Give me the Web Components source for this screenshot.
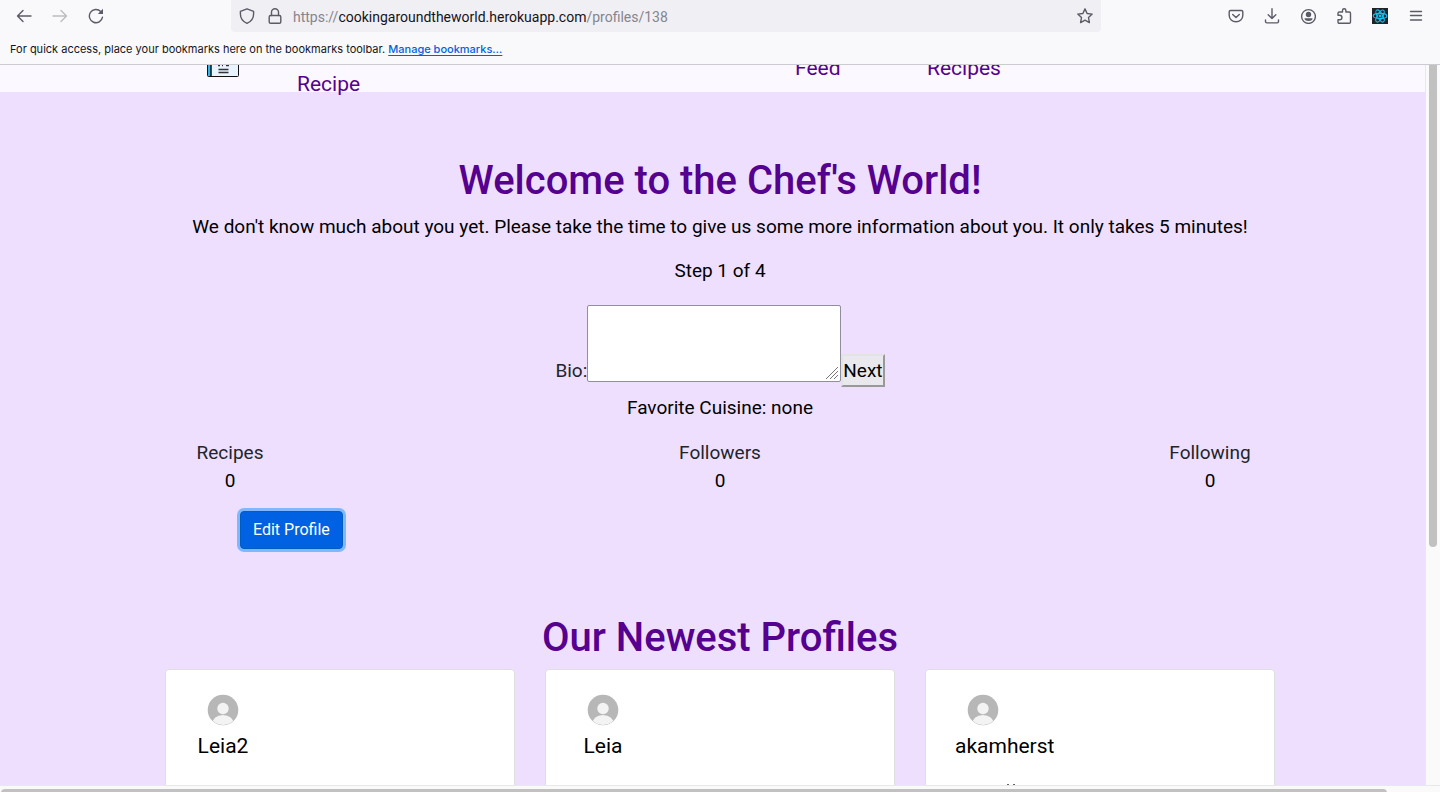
<!DOCTYPE html>
<html lang="en">
<head>
<meta charset="utf-8">
<title>Cooking Around the World</title>
<style>
html,body{margin:0;height:100%}
body{font-family:Roboto,"Liberation Sans",sans-serif;overflow:hidden}
</style>
</head>
<body>
<app-window></app-window>
<script>
const define = (name, html) => customElements.define(name, class extends HTMLElement {
  constructor() {
    super();
    const t = document.createElement('template');
    t.innerHTML = html;
    this.attachShadow({mode: 'open'}).append(t.content.cloneNode(true));
  }
});

define('tool-button', `
<style>
:host{display:block}
button{display:grid;place-items:center;width:36px;height:32px;margin:0;padding:0;border:0;background:none;color:inherit}
</style>
<button type="button"><slot></slot></button>`);

define('address-bar', `
<style>
:host{display:flex;align-items:center;background:#f0eff4;border-radius:0 0 4px 4px;height:32px;color:#5b5b66;font:14px/20px Roboto,"Liberation Sans",sans-serif}
svg{display:block;fill:none;stroke:currentColor;stroke-width:1.4;stroke-linejoin:round;stroke-linecap:round}
.shield{margin-left:8px}
.lock{margin-left:12px;margin-right:10px}
.url{flex:1;color:#85858d;white-space:nowrap;padding-top:2px}
.url b{font-weight:400;color:#15141a}
.star{margin-right:8px}
</style>
<svg class="shield" width="16" height="16" viewBox="0 0 16 16"><path d="M8 .8 14.600 3.300V6c0 4-2.600 7.600-6.600 9.300C4 13.600 1.400 10 1.400 6V3.300z"/></svg>
<svg class="lock" width="16" height="16" viewBox="0 0 16 16"><rect x="2.200" y="7.500" width="11.600" height="7.800" rx="1.400"/><path d="M4.500 7.500V4a3.500 3.300 0 0 1 7 0v3.500"/></svg>
<span class="url">https://<b>cookingaroundtheworld.herokuapp.com</b>/profiles/138</span>
<svg class="star" width="16" height="16" viewBox="0 0 16 16"><path d="m8 .9 2.100 4.600 5.100.6-3.700 3.500.9 5L8 12.200l-4.400 2.400.9-5L.8 6.100l5.100-.6z"/></svg>`);

define('browser-toolbar', `
<style>
:host{display:block;background:#f9f9fb;color:#5b5b66;border-bottom:1px solid #ccccd0;font-family:Inter,"Liberation Sans",sans-serif}
.row{display:grid;grid-template-columns:231px minmax(0,870px) 1fr;height:32px}
.nav,.tools{display:flex}
.nav{padding-left:6px}
.tools{justify-content:flex-end;padding-right:6px}
svg{display:block;fill:none;stroke:currentColor;stroke-width:1.4;stroke-linejoin:round;stroke-linecap:round}
.off{color:#bcbcc2}
p{margin:0;height:32px;padding:1px 10px 0;box-sizing:border-box;font-size:11px;line-height:32px;color:#15141a}
a{color:#0061e0;text-underline-offset:2px;font-weight:500}
</style>
<div class="row">
<div class="nav">
<tool-button><svg width="16" height="16" viewBox="0 0 16 16"><path d="M7 2.500 1.500 8 7 13.500M1.500 8H15"/></svg></tool-button>
<tool-button class="off"><svg width="16" height="16" viewBox="0 0 16 16"><path d="m9 2.500 5.500 5.500L9 13.500M14.500 8H1"/></svg></tool-button>
<tool-button><svg width="16" height="16" viewBox="0 0 16 16"><path d="M14.500 9.200a6.600 6.600 0 1 1-1.800-5.700"/><path d="M15 .8V6H9.800z" fill="currentColor" stroke="none"/></svg></tool-button>
</div>
<address-bar></address-bar>
<div class="tools">
<tool-button><svg width="16" height="16" viewBox="0 0 16 16"><path d="M2.500 2.500h11q1.300 0 1.300 1.300v3.700a6.800 6.300 0 0 1-13.600 0V3.800q0-1.300 1.300-1.300zM4.700 6.400 8 9.600l3.300-3.200"/></svg></tool-button>
<tool-button><svg width="16" height="16" viewBox="0 0 16 16"><path d="M8 .8v9.700M4.200 6.800 8 10.500l3.800-3.700M1.500 12v1.500q0 1.400 1.400 1.400h10.200q1.400 0 1.400-1.400V12"/></svg></tool-button>
<tool-button><svg width="16" height="16" viewBox="0 0 16 16"><circle cx="8.500" cy="8.500" r="6.900"/><g fill="currentColor" stroke="none"><circle cx="8.500" cy="6.500" r="2.700"/><path d="M4.500 10.300h8q0 2.700-4 2.700t-4-2.700"/></g></svg></tool-button>
<tool-button><svg width="16" height="16" viewBox="0 0 16 16"><path d="M2 7.300V5.200q0-1.200 1.200-1.200H6.500V2.400a1.700 1.700 0 0 1 3.400 0V4h3.400q1.200 0 1.200 1.200v8.900q0 1.200-1.200 1.200H3.200Q2 15.300 2 14.100v-2.300h1.700a2.200 2.200 0 0 0 0-4.500z"/></svg></tool-button>
<tool-button><svg width="16" height="16" viewBox="0 0 16 16"><path d="M0 0h16v16H0z" fill="#20232a" stroke="none"/><g stroke="#18c0ee" stroke-width="1.100"><ellipse cx="8" cy="8" rx="6.800" ry="2.600"/><ellipse cx="8" cy="8" rx="6.800" ry="2.600" transform="rotate(60 8 8)"/><ellipse cx="8" cy="8" rx="6.800" ry="2.600" transform="rotate(120 8 8)"/></g><circle cx="8" cy="8" r="1.400" fill="#18c0ee" stroke="none"/></svg></tool-button>
<tool-button><svg width="16" height="16" viewBox="0 0 16 16"><path d="M2.500 3.500h11M2.500 7.500h11M2.500 12h11"/></svg></tool-button>
</div>
</div>
<p>For quick access, place your bookmarks here on the bookmarks toolbar. <a href="#bookmarks">Manage bookmarks…</a></p>`);

define('site-nav', `
<style>
:host{display:block;height:27px;background:#fbf8ff}
nav{display:grid;grid-template-columns:147px 498px 132px auto;justify-content:start;padding-left:150px}
a{color:#560090;text-decoration:none;font-size:21px;line-height:30px;height:30px}
.book{margin-left:57px;height:12px}
.book svg{display:block}
.recipe{margin-top:4px}
.link{margin-top:-12px}
</style>
<nav>
<a class="book" href="#home" aria-label="Home"><svg width="32" height="12" viewBox="0 0 32 12"><path d="M.5-2h31V10.500q0 1-1 1h-29q-1 0-1-1z" fill="#e8f4ff" stroke="#111"/><path d="M1 0h3v11H1z" fill="#37b6e9"/><path d="M4 0v11" stroke="#111" stroke-width="1.500"/><path d="M11.500 4.500h10M11.500 7.500h10M11 .5h2M15 .5h1M19 .5h3" stroke="#333" stroke-width="1.300"/></svg></a>
<a class="recipe" href="#create">Recipe</a>
<a class="link" href="#feed">Feed</a>
<a class="link" href="#recipes">Recipes</a>
</nav>`);

define('bio-form', `
<style>
:host{display:block}
form{display:flex;justify-content:center;align-items:flex-end;margin:0}
label{font-size:19px;line-height:28px;color:#212529;margin-bottom:2px}
textarea{box-sizing:border-box;width:254px;height:77px;margin:0 0 5px;border:1px solid #8f8f9d;border-radius:2px;background:#fff;resize:both;font:19px/28px Roboto,sans-serif}
textarea::-webkit-resizer{background:url("data:image/svg+xml,%3Csvg xmlns='http://www.w3.org/2000/svg' width='15' height='15'%3E%3Cpath d='M1 13 13 1M5 13l8-8M9 13l4-4' stroke='%23777' fill='none'/%3E%3C/svg%3E") no-repeat}
button{box-sizing:border-box;height:33px;margin:0;padding:0;border:2px solid #e3e3e3;border-color:#e3e3e3 #999 #999 #e3e3e3;background:#e9e9ed;color:#000;font:19px/28px Roboto,sans-serif}
</style>
<form><label for="bio">Bio:</label><textarea id="bio"></textarea><button type="button">Next</button></form>`);

define('profile-stat', `
<style>
:host{display:block;width:160px;text-align:center;font-size:19px;line-height:28px;color:#212529}
.value{color:#000}
</style>
<div><slot></slot></div><div class="value"><slot name="value"></slot></div>`);

define('profile-card', `
<style>
:host{display:block;box-sizing:border-box;height:300px;padding:24px 29px;background:#fff;border:1px solid #dfdfdf;border-radius:4px}
.who{width:56px;text-align:center;font-size:21px;line-height:30px;color:#000}
svg{display:block;margin:0 auto 5px}
</style>
<div class="who">
<svg width="32" height="32" viewBox="0 0 32 32"><defs><clipPath id="c"><circle cx="16" cy="16" r="15"/></clipPath></defs><circle cx="16" cy="16" r="15.300" fill="#b7b7b7"/><g clip-path="url(#c)" fill="#f3f3f3"><circle cx="16" cy="14.500" r="5.700"/><path d="M4 32q2-11 12-11t12 11z"/></g></svg>
<slot></slot>
</div>
<slot name="meta"></slot>`);

define('chef-page', `
<style>
:host{display:block;width:100vw;background:#eedfff;color:#000}
.container{max-width:1140px;margin:0 auto}
h1{margin:0;color:#560090;font-size:40px;line-height:48px;font-weight:500;text-align:center}
p{margin:0;text-align:center;font-size:19px;line-height:28px}
.welcome{padding-top:65px}
.intro{margin-top:8px}
.step{margin-top:16px}
bio-form{margin-top:20px}
.cuisine{margin-top:7px}
.stats{display:flex;justify-content:space-between;margin-top:17px}
.edit{display:block;margin:16px 0 0 90px;padding:6px 12px;border:1px solid #005cbf;border-radius:4px;background:#0062e3;color:#fff;font:16px/24px Roboto,sans-serif;box-shadow:0 0 0 3px #80b8ff}
.newest{margin-top:65px}
.cards{display:grid;grid-template-columns:repeat(3,minmax(0,1fr));gap:30px;margin:7px 15px 0}
.peek{display:flex;gap:4px;margin:23px 0 0 52px}
.peek i{width:2px;height:2px;background:#666}
</style>
<site-nav></site-nav>
<main class="container">
<h1 class="welcome">Welcome to the Chef's World!</h1>
<p class="intro">We don't know much about you yet. Please take the time to give us some more information about you. It only takes 5 minutes!</p>
<p class="step">Step 1 of 4</p>
<bio-form></bio-form>
<p class="cuisine">Favorite Cuisine: none</p>
<div class="stats">
<profile-stat>Recipes<span slot="value">0</span></profile-stat>
<profile-stat>Followers<span slot="value">0</span></profile-stat>
<profile-stat>Following<span slot="value">0</span></profile-stat>
</div>
<button class="edit" type="button">Edit Profile</button>
<h1 class="newest">Our Newest Profiles</h1>
<div class="cards">
<profile-card>Leia2</profile-card>
<profile-card>Leia</profile-card>
<profile-card>akamherst<div class="peek" slot="meta"><i></i><i></i></div></profile-card>
</div>
</main>`);

define('scroll-track', `
<style>
:host{display:block;background:#fafafa;border:0 solid #e8e8e8;overflow:hidden}
:host([axis=y]){border-left-width:1px;padding:0 3px 0 3px}
:host([axis=x]){border-top-width:1px;padding:3px 15px 0 1px}
div{background:#c1c1c1}
:host([axis=y]) div{height:67%;border-radius:0 0 4px 4px}
:host([axis=x]) div{width:97.3%;height:8px;border-radius:4px}
</style>
<div></div>`);

define('app-window', `
<style>
:host{display:grid;grid-template-rows:auto minmax(0,1fr) 7px;grid-template-columns:minmax(0,1fr) 15px;height:100vh;overflow:hidden}
browser-toolbar{grid-column:1/-1}
.view{overflow:hidden}
.x{grid-column:1/-1}
</style>
<browser-toolbar></browser-toolbar>
<div class="view"><chef-page></chef-page></div>
<scroll-track axis="y"></scroll-track>
<scroll-track class="x" axis="x"></scroll-track>`);
</script>
</body>
</html>
